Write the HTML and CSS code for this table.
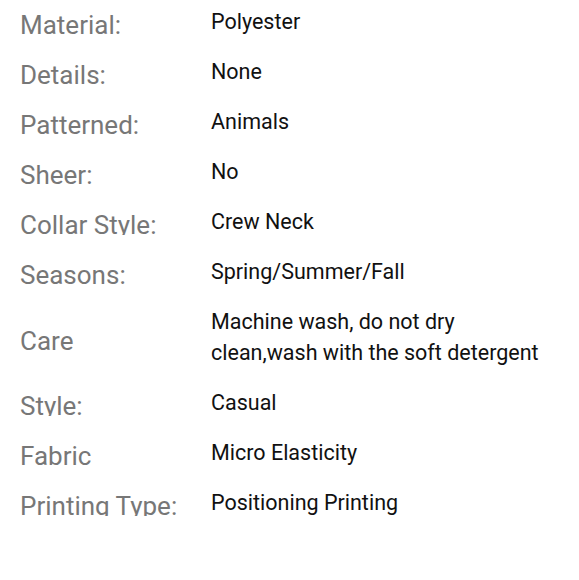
FILE: index.html
```html
<!DOCTYPE html>
<html>
<head>
<meta charset="utf-8">
<link rel="stylesheet" href="styles.css">
</head>
<body>
<div class="specs">
  <div class="row"><div class="label">Material:</div><div class="value">Polyester</div></div>
  <div class="row"><div class="label">Details:</div><div class="value">None</div></div>
  <div class="row"><div class="label">Patterned:</div><div class="value">Animals</div></div>
  <div class="row"><div class="label">Sheer:</div><div class="value">No</div></div>
  <div class="row"><div class="label">Collar Style:</div><div class="value">Crew Neck</div></div>
  <div class="row"><div class="label">Seasons:</div><div class="value">Spring/Summer/Fall</div></div>
  <div class="row"><div class="label">Care</div><div class="value">Machine wash, do not dry clean,wash with the soft detergent</div></div>
  <div class="row"><div class="label">Style:</div><div class="value">Casual</div></div>
  <div class="row"><div class="label">Fabric</div><div class="value">Micro Elasticity</div></div>
  <div class="row"><div class="label">Printing Type:</div><div class="value">Positioning Printing</div></div>
</div>
</body>
</html>
```
FILE: styles.css
```css
html, body {
  margin: 0;
  padding: 0;
  background: #fff;
}
body {
  font-family: Roboto, "Liberation Sans", sans-serif;
}
.specs {
  padding: 0 28px 0 20px;
}
.row {
  display: grid;
  grid-template-columns: 191px 1fr;
  align-items: center;
}
.label {
  font-size: 26px;
  line-height: 20px;
  height: 20px;
  overflow: hidden;
  color: #777777;
  white-space: nowrap;
}
.value {
  font-size: 21.5px;
  line-height: 31px;
  padding: 6px 0 13px 0;
  color: #111111;
}
```
